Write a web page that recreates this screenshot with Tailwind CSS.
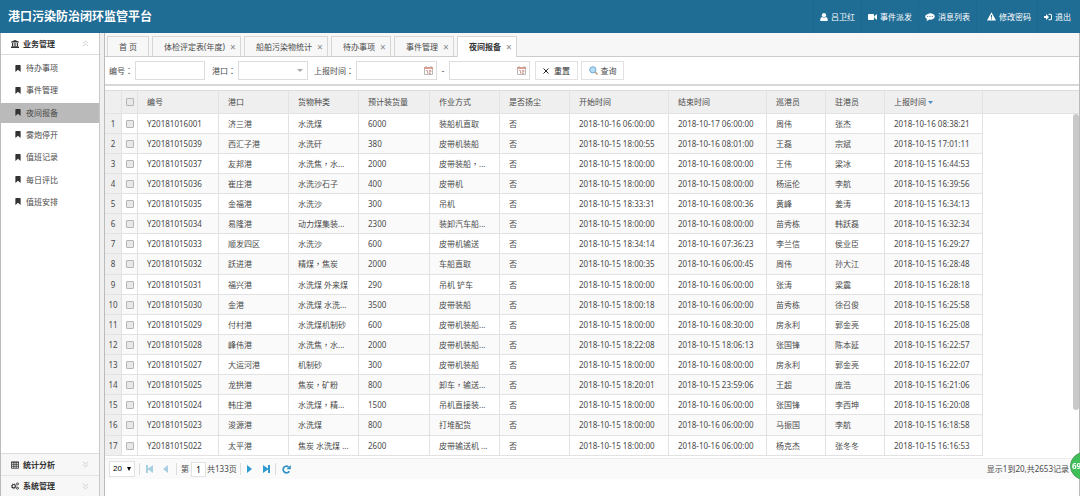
<!DOCTYPE html>
<html lang="zh-CN">
<head>
<meta charset="utf-8">
<meta name="viewport" content="width=device-width, initial-scale=1">
<title>港口污染防治闭环监管平台</title>
<script src="https://cdn.jsdelivr.net/npm/@tailwindcss/browser@4"></script>
</head>
<body class="flex h-screen flex-col overflow-hidden bg-white font-['Noto_Sans','Noto_Sans_CJK_SC',sans-serif] text-[8px] leading-3 text-[#4a4a4a]">
<svg class="hidden">
  <symbol id="bookmark" viewBox="0 0 6 8"><path d="M0 .6Q0 0 .6 0h4.8q.6 0 .6.6V8L3 5.3 0 8z"/></symbol>
  <symbol id="down2" viewBox="0 0 8 8"><path d="M1 1l3 2.5L7 1M1 4.2l3 2.5 3-2.5" fill="none" stroke="currentColor"/></symbol>
  <symbol id="calendar" viewBox="0 0 9 9"><path d="M.5 1.5h8v7h-8z" fill="#fff" stroke="#b9b9b9"/><path d="M0 1h9v2H0z" fill="#e09c90"/><path d="M2 0v2M7 0v2" stroke="#aaa"/><path d="M2 4.500h1.500v3M5 4.500h2v1.300H5v1.700h2" fill="none" stroke="#c98f88" stroke-width=".8"/></symbol>
</svg>

<header class="flex h-[33px] shrink-0 items-center justify-between bg-[#1f6d95] pr-[3px] pl-2 text-white">
  <h1 class="text-[12px] leading-4 font-bold">港口污染防治闭环监管平台</h1>
  <nav class="flex h-full *:flex *:items-center *:gap-[3px] *:border-l *:border-black/5 *:px-[6px]">
    <a href="#"><svg class="size-2 fill-current" viewBox="0 0 8 8"><circle cx="4" cy="2.2" r="2.1"/><path d="M.3 8V6.5Q.3 4 2.2 4 4 5.4 5.8 4q1.9 0 1.9 2.5V8z"/></svg>吕卫红</a>
    <a href="#"><svg class="h-2 w-[9px] fill-current" viewBox="0 0 9 8"><rect y="1" width="6" height="6" rx="1"/><path d="M6.3 3.3L9 1v6L6.3 4.7z"/></svg>事件派发</a>
    <a href="#"><svg class="h-2 w-[10px]" viewBox="0 0 10 8"><path fill="#fff" d="M5 .3c2.8 0 4.8 1.4 4.8 3.2S7.800 6.700 5 6.700l-.8-.1Q2.900 7.800 1.300 7.900q.7-.7.8-1.700Q.2 5.200.2 3.500.2 1.700 5 .3z"/><g fill="#1f6d95"><circle cx="2.700" cy="3.500" r=".6"/><circle cx="5" cy="3.500" r=".6"/><circle cx="7.300" cy="3.500" r=".6"/></g></svg>消息列表</a>
    <a href="#"><svg class="ml-1 size-[9px]" viewBox="0 0 9 9"><path fill="#fff" d="M4.500.2L9 8.400H0z"/><path d="M4.500 3v2.600M4.500 6.300v1.100" stroke="#1f6d95"/></svg>修改密码</a>
    <a href="#"><svg class="size-2 fill-current" viewBox="0 0 8 8"><path d="M0 3h2V1l3 3-3 3V5H0z"/><path d="M4.500.8h1.800Q8 .8 8 2.300v3.400Q8 7.200 6.300 7.200H4.500V6.200h1.700Q7 6.200 7 5.500v-3Q7 1.800 6.200 1.800H4.500z"/></svg>退出</a>
  </nav>
</header>

<div class="flex min-h-0 flex-1 border-x border-[#bbb]">
  <aside class="flex w-[99px] shrink-0 flex-col border-r border-[#c8c8c8]">
    <button class="flex h-[22px] shrink-0 items-center border-b border-[#ddd] px-[10px] text-left font-bold text-[#333]">
      <svg class="mr-1 size-2 fill-current" viewBox="0 0 8 8"><path d="M4 0l4 1.800v.7H0v-.7zM1 3h1.200v3H1zM3.400 3h1.200v3H3.400zM5.800 3H7v3H5.800zM.4 6h7.200v.8H.4zM0 7h8v1H0z"/></svg>业务管理
      <svg class="ml-auto size-[7px] rotate-180 text-[#ccc]"><use href="#down2"/></svg>
    </button>
    <ul class="mt-[3px] flex h-[154px] flex-col justify-between *:h-5 [&_a]:flex [&_a]:h-full [&_a]:items-center [&_a]:gap-[5px] [&_a]:pl-[14px] [&_svg]:h-[7px] [&_svg]:w-[6px] [&_svg]:fill-[#333]">
      <li><a href="#"><svg><use href="#bookmark"/></svg>待办事项</a></li>
      <li><a href="#"><svg><use href="#bookmark"/></svg>事件管理</a></li>
      <li class="bg-[#bababa]"><a href="#"><svg><use href="#bookmark"/></svg>夜间报备</a></li>
      <li><a href="#"><svg><use href="#bookmark"/></svg>雾炮停开</a></li>
      <li><a href="#"><svg><use href="#bookmark"/></svg>值班记录</a></li>
      <li><a href="#"><svg><use href="#bookmark"/></svg>每日评比</a></li>
      <li><a href="#"><svg><use href="#bookmark"/></svg>值班安排</a></li>
    </ul>
    <button class="mt-auto flex h-[22px] shrink-0 items-center border-t border-[#ddd] bg-[#f7f7f7] px-[10px] font-bold text-[#333]">
      <svg class="mr-1 size-2" viewBox="0 0 8 8"><path d="M.5 1h7v6.300h-7zM0 1.200h8M.5 3.300h7M.5 5.300h7M2.800 1v6M5.200 1v6" fill="none" stroke="currentColor" stroke-width=".8"/></svg>统计分析
      <svg class="ml-auto size-[7px] text-[#ccc]"><use href="#down2"/></svg>
    </button>
    <button class="flex h-[21px] shrink-0 items-center border-t border-[#e4e4e4] bg-[#f7f7f7] px-[10px] font-bold text-[#333]">
      <svg class="mr-1 size-2" viewBox="0 0 8 8" fill="none" stroke="currentColor"><circle cx="2.700" cy="4.200" r="1.700" stroke-width="1.200"/><circle cx="2.700" cy="4.200" r="2.500" stroke-width=".6" stroke-dasharray="1 .96"/><circle cx="6.500" cy="1.900" r="1" stroke-width=".9"/><circle cx="6.500" cy="6.200" r="1" stroke-width=".9"/></svg>系统管理
      <svg class="ml-auto size-[7px] text-[#ccc]"><use href="#down2"/></svg>
    </button>
  </aside>
  <div class="w-1 shrink-0 bg-[#f0f0f0]"></div>

  <main class="flex min-w-0 flex-1 flex-col border-l border-[#bbb]">
    <div class="flex h-6 shrink-0 items-end gap-[3px] border-b border-[#ccc] bg-[#f7f7f7] pl-[2px] *:flex *:h-5 *:items-center *:border *:border-b-0 *:border-[#d6d6d6]">
      <div class="px-[11px]"><button>首 页</button></div>
      <div class="pr-1 pl-[11px]"><button>体检评定表(年度)</button><button class="ml-[5px] w-[6px] text-[10px] text-[#888]" aria-label="关闭">×</button></div>
      <div class="pr-1 pl-[11px]"><button>船舶污染物统计</button><button class="ml-[5px] w-[6px] text-[10px] text-[#888]" aria-label="关闭">×</button></div>
      <div class="pr-1 pl-[11px]"><button>待办事项</button><button class="ml-[5px] w-[6px] text-[10px] text-[#888]" aria-label="关闭">×</button></div>
      <div class="pr-1 pl-[11px]"><button>事件管理</button><button class="ml-[5px] w-[6px] text-[10px] text-[#888]" aria-label="关闭">×</button></div>
      <div class="-mb-px box-content bg-white pr-1 pl-[11px]"><button class="font-bold text-[#333]">夜间报备</button><button class="ml-[5px] w-[6px] text-[10px] text-[#888]" aria-label="关闭">×</button></div>
    </div>

    <form class="flex h-[29px] shrink-0 items-center border-b-2 border-[#d8d8d8] pl-1" onsubmit="return false">
      <label for="code" class="w-[26px]">编号<span lang="zh-TW" class="font-['Noto_Sans_CJK_TC',sans-serif]">：</span></label>
      <input id="code" class="h-[19px] w-[70px] border border-[#ddd] px-1">
      <label for="port" class="ml-[7px] w-[26px]">港口<span lang="zh-TW" class="font-['Noto_Sans_CJK_TC',sans-serif]">：</span></label>
      <div class="relative">
        <select id="port" class="block h-[19px] w-[70px] appearance-none border border-[#ddd] px-1"><option></option><option>济三港</option></select>
        <svg class="pointer-events-none absolute top-2 right-[5px] h-[3px] w-[6px] fill-[#aaa]" viewBox="0 0 6 3"><path d="M0 0h6L3 3z"/></svg>
      </div>
      <label for="from" class="ml-[6px] w-[42px]">上报时间<span lang="zh-TW" class="font-['Noto_Sans_CJK_TC',sans-serif]">：</span></label>
      <div class="relative">
        <input id="from" class="block h-[19px] w-[81px] border border-[#ddd] pr-4 pl-1">
        <svg class="absolute top-[5px] right-1 size-[9px]"><use href="#calendar"/></svg>
      </div>
      <span class="w-3 text-center">-</span>
      <div class="relative">
        <input aria-label="上报时间止" class="block h-[19px] w-[81px] border border-[#ddd] pr-4 pl-1">
        <svg class="absolute top-[5px] right-1 size-[9px]"><use href="#calendar"/></svg>
      </div>
      <button type="reset" class="ml-[5px] flex h-[19px] w-[43px] items-center justify-center gap-[5px] border border-[#e2e2e2] text-[#333]"><svg class="size-[6px]" viewBox="0 0 6 6"><path d="M.5.5l5 5M5.500.5l-5 5" stroke="#222"/></svg>重置</button>
      <button class="ml-[3px] flex h-[19px] w-[43px] items-center justify-center gap-[3px] border border-[#e2e2e2]"><svg class="size-[9px]" viewBox="0 0 9 9"><path d="M6 6l2.500 2.500" stroke="#b99a70" stroke-width="1.400"/><circle cx="3.800" cy="3.800" r="3.100" fill="#b5ddf5" stroke="#6fa9cf"/></svg>查询</button>
    </form>

    <div class="mt-1 min-h-0 flex-1 overflow-hidden border-t border-[#ddd]">
      <div class="relative h-full overflow-hidden">
        <table class="w-full table-fixed border-separate border-spacing-0 text-left whitespace-nowrap">
          <colgroup><col class="w-[17px]"><col class="w-[16px]"><col class="w-[81px]"><col class="w-[70px]"><col class="w-[70px]"><col class="w-[71px]"><col class="w-[70px]"><col class="w-[70px]"><col class="w-[99px]"><col class="w-[98px]"><col class="w-[59px]"><col class="w-[59px]"><col class="w-[98px]"><col></colgroup>
          <thead><tr class="h-[23px] bg-[#efefef] *:border-r *:border-b *:border-[#e2e2e2] *:py-0 *:pl-[9px] *:font-normal">
            <th></th>
            <th class="pl-1!"><input type="checkbox" aria-label="全选" class="block size-2 appearance-none rounded-[1px] border border-[#b5b5b5] bg-[#e8e8e8]"></th>
            <th>编号</th><th>港口</th><th>货物种类</th><th>预计装货量</th><th>作业方式</th><th>是否扬尘</th><th>开始时间</th><th>结束时间</th><th>巡港员</th><th>驻港员</th>
            <th><span class="flex items-center gap-[2px]">上报时间<svg class="h-[3px] w-[5px] fill-[#4a8fc7]" viewBox="0 0 5 3"><path d="M0 0h5L2.500 3z"/></svg></span></th>
            <th class="border-r-0!"></th>
          </tr></thead>
          <tbody id="rows" class="[&>tr:nth-child(8n)]:h-[21px]"></tbody>
        </table>
        <div class="absolute top-[23px] right-0 h-[296px] w-[6px] rounded-full bg-[#c9c9c9]"></div>
      </div>
    </div>

    <div class="mb-[17px] flex h-[21px] shrink-0 items-center border-t border-[#eee] bg-[#fafafa] pr-[10px] pl-1">
      <div class="relative">
        <select aria-label="每页条数" class="block h-4 w-[26px] appearance-none border border-[#e2e2e2] bg-white pl-[3px] font-['Liberation_Sans',sans-serif] text-[8px] text-black"><option>20</option><option>50</option></select>
        <svg class="pointer-events-none absolute top-[6px] right-1 h-1 w-[4px]" viewBox="0 0 4 4"><path d="M0 0h4L2 4z"/></svg>
      </div>
      <div class="ml-1 h-3 w-px bg-[#ddd]"></div>
      <button class="ml-[6px] text-[#a9cfe3]" aria-label="首页"><svg class="h-2 w-[7px] fill-current" viewBox="0 0 7 8"><path d="M0 0h2v3.500L7 0v8L2 4.500V8H0z"/></svg></button>
      <button class="ml-[10px] text-[#a9cfe3]" aria-label="上一页"><svg class="h-2 w-[5px] fill-current" viewBox="0 0 5 8"><path d="M5 0v8L0 4z"/></svg></button>
      <div class="ml-2 h-3 w-px bg-[#ddd]"></div>
      <label for="page" class="ml-1 w-[10px]">第</label>
      <input id="page" value="1" class="h-[15px] w-[15px] border border-[#e2e2e2] bg-white text-center text-black">
      <span class="ml-px w-[31px]">共133页</span>
      <div class="ml-[2px] h-3 w-px bg-[#ddd]"></div>
      <button class="ml-[6px] text-[#2f9bd0]" aria-label="下一页"><svg class="h-2 w-[5px] fill-current" viewBox="0 0 5 8"><path d="M0 0v8l5-4z"/></svg></button>
      <button class="ml-[11px] text-[#2f9bd0]" aria-label="末页"><svg class="h-2 w-[7px] fill-current" viewBox="0 0 7 8"><path d="M7 0H5v3.500L0 0v8l5-3.500V8h2z"/></svg></button>
      <div class="ml-[5px] h-3 w-px bg-[#ddd]"></div>
      <button class="ml-[6px] text-[#2f8fc8]" aria-label="刷新"><svg class="size-[9px]" viewBox="0 0 9 9"><path d="M7.300 6.200A3.300 3.300 0 1 1 6.500 1.900" fill="none" stroke="currentColor" stroke-width="1.700"/><path d="M8.800 0v4.300H4.500z" fill="currentColor"/></svg></button>
      <span class="ml-auto">显示1到20,共2653记录</span>
    </div>
  </main>
</div>
<button class="fixed -right-[18px] bottom-4 flex size-7 items-center rounded-full border border-[#4d9a5a] bg-[#3fbf58] pl-px font-bold text-white">69</button>

<script>
const rows = `Y20181016001|济三港|水洗煤|6000|装船机直取|2018-10-16 06:00:00|2018-10-17 06:00:00|周伟|张杰|2018-10-16 08:38:21
Y20181015039|西汇子港|水洗矸|380|皮带机装船|2018-10-15 18:00:55|2018-10-16 08:01:00|王磊|宗斌|2018-10-15 17:01:11
Y20181015037|友邦港|水洗焦，水...|2000|皮带装船，...|2018-10-15 18:00:00|2018-10-16 08:00:00|王伟|梁冰|2018-10-15 16:44:53
Y20181015036|崔庄港|水洗沙石子|400|皮带机|2018-10-15 18:00:00|2018-10-15 08:00:00|杨运伦|李航|2018-10-15 16:39:56
Y20181015035|金福港|水洗沙|300|吊机|2018-10-15 18:33:31|2018-10-16 08:00:36|黄峰|姜涛|2018-10-15 16:34:13
Y20181015034|易隆港|动力煤集装...|2300|装卸汽车船...|2018-10-15 18:00:00|2018-10-16 08:00:00|苗秀栋|韩跃磊|2018-10-15 16:32:34
Y20181015033|顺发四区|水洗沙|600|皮带机输送|2018-10-15 18:34:14|2018-10-16 07:36:23|李兰信|侯业臣|2018-10-15 16:29:27
Y20181015032|跃进港|精煤，焦炭|2000|车船直取|2018-10-15 18:00:35|2018-10-16 06:00:45|周伟|孙大江|2018-10-15 16:28:48
Y20181015031|福兴港|水洗煤 外来煤|290|吊机 铲车|2018-10-15 18:00:00|2018-10-16 06:00:00|张涛|梁震|2018-10-15 16:28:18
Y20181015030|金港|水洗煤 水洗...|3500|皮带装船|2018-10-15 18:00:18|2018-10-16 06:00:00|苗秀栋|徐召俊|2018-10-15 16:25:58
Y20181015029|付村港|水洗煤机制砂|600|皮带机装船...|2018-10-15 18:00:00|2018-10-16 08:30:00|房永利|郭金亮|2018-10-15 16:25:08
Y20181015028|峰伟港|水洗焦，水...|2000|皮带机装船...|2018-10-15 18:22:08|2018-10-15 18:06:13|张国锋|陈本延|2018-10-15 16:22:57
Y20181015027|大运河港|机制砂|300|皮带机装船|2018-10-15 18:00:00|2018-10-16 08:00:00|房永利|郭金亮|2018-10-15 16:22:07
Y20181015025|龙拱港|焦炭，矿粉|800|卸车，输送...|2018-10-15 18:20:01|2018-10-15 23:59:06|王超|庞浩|2018-10-15 16:21:06
Y20181015024|韩庄港|水洗煤，精...|1500|吊机直接装...|2018-10-15 18:00:00|2018-10-16 06:00:00|张国锋|李西坤|2018-10-15 16:20:08
Y20181015023|浚源港|水洗煤|800|打堆配货|2018-10-15 18:00:00|2018-10-16 06:00:00|马振国|李航|2018-10-15 16:18:58
Y20181015022|太平港|焦炭 水洗煤 ...|2600|皮带输送机 ...|2018-10-15 18:00:00|2018-10-16 06:00:00|杨克杰|张冬冬|2018-10-15 16:16:53`.split('\n').map(line => line.split('|'));
// Traditional-script punctuation sits in the middle of its square
const comma = `<span lang="zh-TW" class="font-['Noto_Sans_CJK_TC',sans-serif]">，</span>`;
document.getElementById('rows').innerHTML = rows.map((r, i) => {
  const cells = [...r.slice(0, 5), '否', ...r.slice(5)];
  return `<tr class="h-5 even:bg-[#fafafa] *:border-r *:border-b *:border-[#e2e2e2] *:py-0 *:pl-[9px]">
    <td class="bg-[#efefef] pl-0! text-center">${i + 1}</td>
    <td class="pl-1!"><input type="checkbox" aria-label="选择 ${cells[0]}" class="block size-2 appearance-none rounded-[1px] border border-[#b5b5b5] bg-[#e8e8e8]"></td>
    ${cells.map(c => `<td>${c.replace('，', comma)}</td>`).join('')}
    <td class="border-0! bg-white"></td></tr>`;
}).join('');
</script>
</body>
</html>
